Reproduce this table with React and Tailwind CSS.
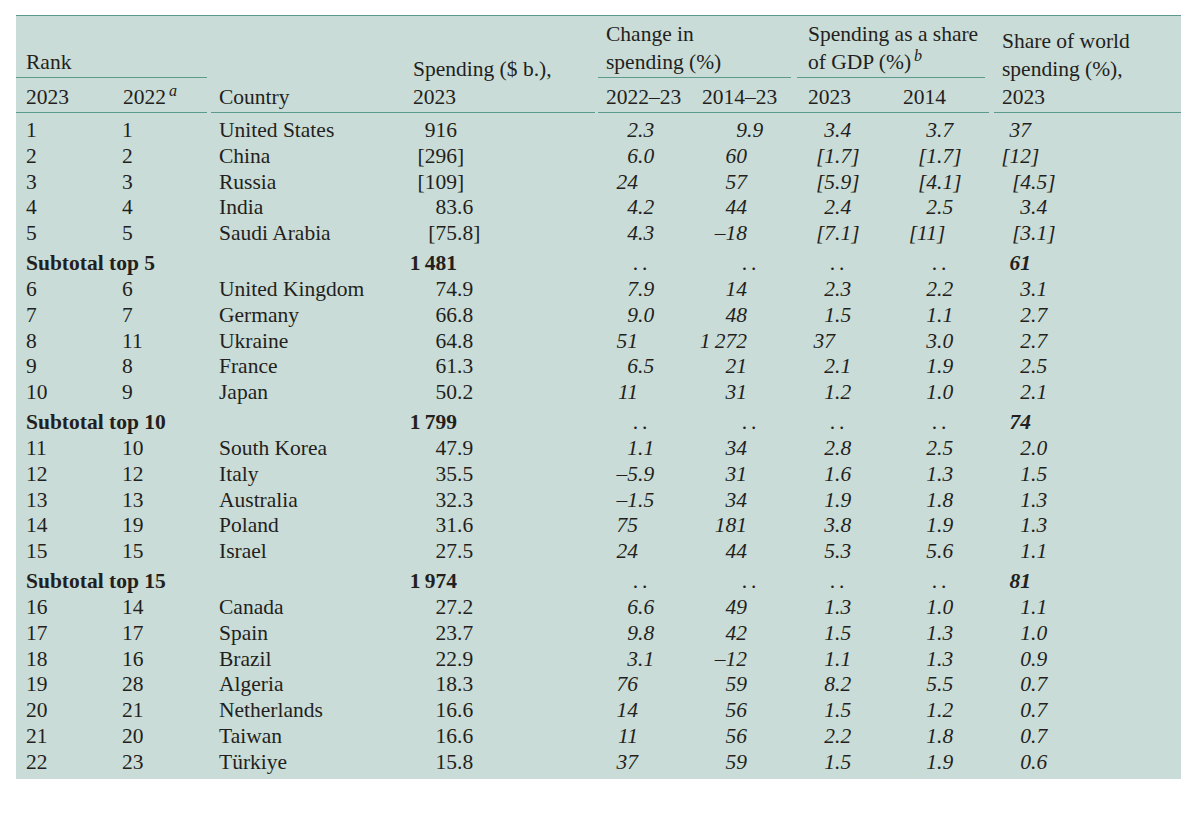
import React from 'react';

const GRID = 'grid grid-cols-[96px_97px_194px_193px_98px_100px_97px_99px_191px]';
const RULE = 'h-px bg-[#5b9a8d]';

// width of the integer part for each numeric column, so decimals line up
const ALIGN = {
    3: 'w-[54px]',
    4: 'w-[42px]',
    5: 'w-[53px]',
    6: 'w-[41px]',
    7: 'w-[46px]',
    8: 'w-[41px]',
};

const rows = [
    ['1', '1', 'United States', '916', '2.3', '9.9', '3.4', '3.7', '37'],
    ['2', '2', 'China', '[296]', '6.0', '60', '[1.7]', '[1.7]', '[12]'],
    ['3', '3', 'Russia', '[109]', '24', '57', '[5.9]', '[4.1]', '[4.5]'],
    ['4', '4', 'India', '83.6', '4.2', '44', '2.4', '2.5', '3.4'],
    ['5', '5', 'Saudi Arabia', '[75.8]', '4.3', '–18', '[7.1]', '[11]', '[3.1]'],
    { label: 'Subtotal top 5', total: '1\u2009481', share: '61' },
    ['6', '6', 'United Kingdom', '74.9', '7.9', '14', '2.3', '2.2', '3.1'],
    ['7', '7', 'Germany', '66.8', '9.0', '48', '1.5', '1.1', '2.7'],
    ['8', '11', 'Ukraine', '64.8', '51', '1\u2009272', '37', '3.0', '2.7'],
    ['9', '8', 'France', '61.3', '6.5', '21', '2.1', '1.9', '2.5'],
    ['10', '9', 'Japan', '50.2', '11', '31', '1.2', '1.0', '2.1'],
    { label: 'Subtotal top 10', total: '1\u2009799', share: '74' },
    ['11', '10', 'South Korea', '47.9', '1.1', '34', '2.8', '2.5', '2.0'],
    ['12', '12', 'Italy', '35.5', '–5.9', '31', '1.6', '1.3', '1.5'],
    ['13', '13', 'Australia', '32.3', '–1.5', '34', '1.9', '1.8', '1.3'],
    ['14', '19', 'Poland', '31.6', '75', '181', '3.8', '1.9', '1.3'],
    ['15', '15', 'Israel', '27.5', '24', '44', '5.3', '5.6', '1.1'],
    { label: 'Subtotal top 15', total: '1\u2009974', share: '81' },
    ['16', '14', 'Canada', '27.2', '6.6', '49', '1.3', '1.0', '1.1'],
    ['17', '17', 'Spain', '23.7', '9.8', '42', '1.5', '1.3', '1.0'],
    ['18', '16', 'Brazil', '22.9', '3.1', '–12', '1.1', '1.3', '0.9'],
    ['19', '28', 'Algeria', '18.3', '76', '59', '8.2', '5.5', '0.7'],
    ['20', '21', 'Netherlands', '16.6', '14', '56', '1.5', '1.2', '0.7'],
    ['21', '20', 'Taiwan', '16.6', '11', '56', '2.2', '1.8', '0.7'],
    ['22', '23', 'Türkiye', '15.8', '37', '59', '1.5', '1.9', '0.6'],
];

function Num({ v, col, className = '' }) {
    if (v === '..') {
        return (
            <div className={`flex ${className}`}>
                <span className={`${ALIGN[col]} text-right`}>.</span>
                <span className="pl-[4px]">.</span>
            </div>
        );
    }
    let head = v;
    let tail = '';
    if (head.endsWith(']')) {
        head = head.slice(0, -1);
        tail = ']';
    }
    const dot = head.indexOf('.');
    if (dot >= 0) {
        tail = head.slice(dot) + tail;
        head = head.slice(0, dot);
    }
    return (
        <div className={`flex whitespace-nowrap ${className}`}>
            <span className={`${ALIGN[col]} shrink-0 text-right`}>{head}</span>
            <span>{tail}</span>
        </div>
    );
}

function Row({ r }) {
    return (
        <div className={`${GRID} leading-[25.75px]`}>
            <div className="pl-[10px]">{r[0]}</div>
            <div className="pl-[10px]">{r[1]}</div>
            <div className="pl-[10px] whitespace-nowrap">{r[2]}</div>
            <Num v={r[3]} col={3} />
            <Num v={r[4]} col={4} className="italic" />
            <Num v={r[5]} col={5} className="italic" />
            <Num v={r[6]} col={6} className="italic" />
            <Num v={r[7]} col={7} className="italic" />
            <Num v={r[8]} col={8} className="italic" />
        </div>
    );
}

function Subtotal({ s }) {
    return (
        <div className={`${GRID} leading-[25.75px] pt-[4.5px]`}>
            <div className="col-span-3 pl-[10px] font-bold">{s.label}</div>
            <Num v={s.total} col={3} className="font-bold" />
            <Num v=".." col={4} />
            <Num v=".." col={5} />
            <Num v=".." col={6} />
            <Num v=".." col={7} />
            <Num v={s.share} col={8} className="italic font-bold" />
        </div>
    );
}

function Header() {
    return (
        <div className={`${GRID} grid-rows-[61px_1px_34px_1px] leading-[28px]`}>
            <div className="col-start-1 col-span-2 row-start-1 self-end pl-[10px] pb-[1px]">Rank</div>
            <div className="col-start-4 row-start-1 row-span-3 self-end pl-[10px] pb-[1px]">
                <div>Spending ($ b.),</div>
                <div>2023</div>
            </div>
            <div className="col-start-5 col-span-2 row-start-1 self-end pl-[10px] pb-[1px]">
                <div>Change in</div>
                <div>spending (%)</div>
            </div>
            <div className="col-start-7 col-span-2 row-start-1 self-end pl-[14px] pb-[1px]">
                <div>Spending as a share</div>
                <div>
                    of GDP (%)<sup className="italic ml-[3px]">b</sup>
                </div>
            </div>
            <div className="col-start-9 row-start-1 row-span-3 self-end pl-[12px] pb-[1px]">
                <div>Share of world</div>
                <div>spending (%),</div>
                <div>2023</div>
            </div>

            <div className={`col-start-1 col-span-2 row-start-2 mr-[2px] ${RULE}`} />
            <div className={`col-start-5 col-span-2 row-start-2 ml-[2px] mr-[3px] ${RULE}`} />
            <div className={`col-start-7 col-span-2 row-start-2 ml-[3px] mr-[5px] ${RULE}`} />

            <div className="col-start-1 row-start-3 self-end pl-[10px] pb-[1px]">2023</div>
            <div className="col-start-2 row-start-3 self-end pl-[11px] pb-[1px]">
                2022<sup className="italic ml-[3px]">a</sup>
            </div>
            <div className="col-start-3 row-start-3 self-end pl-[10px] pb-[1px]">Country</div>
            <div className="col-start-5 row-start-3 self-end pl-[10px] pb-[1px]">2022–23</div>
            <div className="col-start-6 row-start-3 self-end pl-[8px] pb-[1px]">2014–23</div>
            <div className="col-start-7 row-start-3 self-end pl-[14px] pb-[1px]">2023</div>
            <div className="col-start-8 row-start-3 self-end pl-[12px] pb-[1px]">2014</div>

            <div className={`col-start-1 col-span-2 row-start-4 mr-[2px] ${RULE}`} />
            <div className={`col-start-3 col-span-2 row-start-4 ml-[2px] mr-[1px] ${RULE}`} />
            <div className={`col-start-5 col-span-4 row-start-4 ml-[2px] mr-[1px] ${RULE}`} />
            <div className={`col-start-9 row-start-4 ml-[4px] ${RULE}`} />
        </div>
    );
}

export default function App() {
    return (
        <div className="min-h-screen bg-white pt-[15px] pl-[16px] font-['Liberation_Serif',serif] text-[21.5px] text-[#231f20]">
            <div className="w-[1165px] h-[764px] overflow-hidden bg-[#cadcd7] border-t border-[#5b9a8d]">
                <Header />
                <div className="pt-[5px]">
                    {rows.map((r, i) =>
                        Array.isArray(r) ? <Row key={i} r={r} /> : <Subtotal key={i} s={r} />
                    )}
                </div>
            </div>
        </div>
    );
}
